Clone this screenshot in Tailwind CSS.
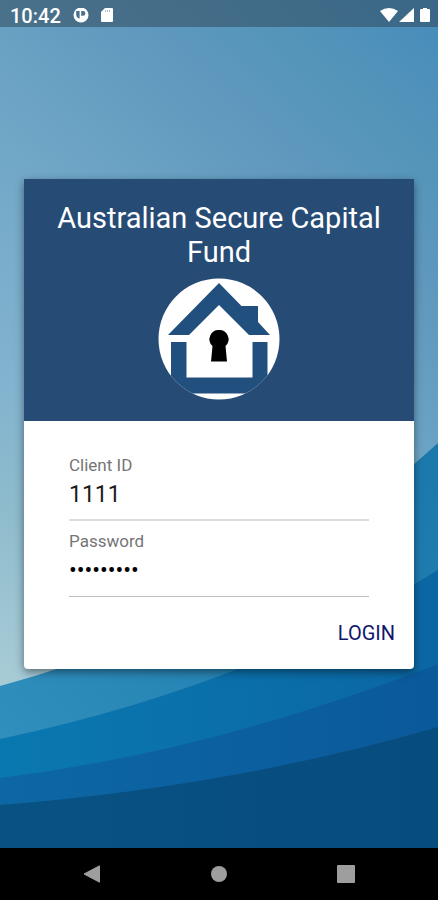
<!DOCTYPE html>
<html lang="en">
<head>
<meta charset="utf-8">
<meta name="viewport" content="width=device-width, initial-scale=1">
<title>Australian Secure Capital Fund</title>
<script src="https://cdn.jsdelivr.net/npm/@tailwindcss/browser@4"></script>
</head>
<body class="font-[Roboto,sans-serif]">
<div class="relative isolate flex min-h-screen flex-col">
  <!-- wave backdrop -->
  <svg class="absolute inset-0 -z-10 h-full w-full" viewBox="0 0 438 900" preserveAspectRatio="none" aria-hidden="true">
    <defs>
      <linearGradient id="sky" gradientUnits="userSpaceOnUse" x1="438" y1="30" x2="-84" y2="604">
        <stop offset="0" stop-color="#488dbb"/>
        <stop offset="0.14" stop-color="#5595ba"/>
        <stop offset="0.26" stop-color="#6098be"/>
        <stop offset="0.41" stop-color="#6ba3c4"/>
        <stop offset="0.71" stop-color="#82b3cf"/>
        <stop offset="0.83" stop-color="#8ebbcc"/>
        <stop offset="1" stop-color="#a8ccd6"/>
      </linearGradient>
      <linearGradient id="w1" x1="0" y1="1" x2="1" y2="0">
        <stop offset="0" stop-color="#3795c2"/>
        <stop offset="0.5" stop-color="#2684b4"/>
        <stop offset="1" stop-color="#1a78ab"/>
      </linearGradient>
      <linearGradient id="w2" x1="0" y1="0" x2="1" y2="0">
        <stop offset="0" stop-color="#0a78b0"/>
        <stop offset="1" stop-color="#0b67a3"/>
      </linearGradient>
      <linearGradient id="w3" x1="0" y1="0" x2="1" y2="0">
        <stop offset="0" stop-color="#0d67a5"/>
        <stop offset="1" stop-color="#0a599b"/>
      </linearGradient>
      <linearGradient id="w4" x1="0" y1="0" x2="1" y2="0">
        <stop offset="0" stop-color="#085283"/>
        <stop offset="1" stop-color="#074c7e"/>
      </linearGradient>
    </defs>
    <path fill="url(#sky)" d="M0 0H438V900H0Z"/>
    <path fill="url(#w1)" d="M0 686Q240 622 438 443V900H0Z"/>
    <path fill="url(#w2)" d="M0 739Q250 686 438 570V900H0Z"/>
    <path fill="url(#w3)" d="M0 778Q215 751 438 664V900H0Z"/>
    <path fill="url(#w4)" d="M0 805Q235 786 438 727V900H0Z"/>
  </svg>

  <header class="flex h-[27px] items-center justify-between bg-[#324a5c]/55 pt-1 pr-2 pl-[10px] text-white">
    <div class="flex items-center gap-3">
      <span class="text-xl leading-5 font-medium">10:42</span>
      <svg class="size-4" viewBox="0 0 16 16" aria-hidden="true">
        <circle cx="8" cy="7" r="7.500" fill="#fff"/>
        <path fill="#47708e" d="M3.200 3H6.600V10.600A4.600 4.600 0 0 1 3.200 6ZM8.200 3H10A2.400 2.400 0 0 1 10 7.800H8.200Z"/>
      </svg>
      <svg class="h-4 w-3" viewBox="0 0 12 16" aria-hidden="true">
        <path fill="#fff" d="M4 0H11Q12 0 12 1V13Q12 14 11 14H1Q0 14 0 13V4Z"/>
        <path stroke="#a9bfce" d="M4.500 2V4M6.500 2V4M8.500 2V4"/>
      </svg>
    </div>
    <div class="flex items-center gap-1">
      <svg class="h-4 w-[36px]" viewBox="0 0 36 16" fill="#fff" aria-hidden="true">
        <path d="M0 3Q9 -3 18 3L9 14Z"/>
        <path d="M34 0V14H19Z"/>
      </svg>
      <svg class="h-4 w-[10px]" viewBox="0 0 10 16" fill="#fff" aria-hidden="true">
        <path d="M3 0H7V1H9Q10 1 10 2V13Q10 14 9 14H1Q0 14 0 13V2Q0 1 1 1H3Z"/>
      </svg>
    </div>
  </header>

  <main class="flex flex-1 flex-col justify-center px-6 pb-[27px]">
    <div class="overflow-hidden rounded-b-[4px] bg-white shadow-[0_3px_8px_rgba(0,0,0,0.45)]">
      <div class="flex flex-col items-center gap-2 bg-[#264b75] px-6 pt-[22px] pb-5">
        <h1 class="text-center text-[29px] leading-[34px] text-white">Australian Secure Capital Fund</h1>
        <svg class="size-[124px]" viewBox="0 0 124 124" role="img" aria-label="House with keyhole">
          <defs><clipPath id="disc"><circle cx="62" cy="62" r="60.500"/></clipPath></defs>
          <circle cx="62" cy="62" r="60.500" fill="#fff"/>
          <g clip-path="url(#disc)" fill="#22507e">
            <path d="M62 6L84.500 29H101V45L113 58H92L62 28L32 58H11Z"/>
            <path d="M14 65H29.500V100.500H95.500V65H110.500V116.500H14Z"/>
          </g>
          <path fill="#000" d="M62 53A9.200 9.200 0 0 1 68.500 69L70 84.500H54L55.500 69A9.200 9.200 0 0 1 62 53Z"/>
        </svg>
      </div>
      <form class="flex flex-col px-[45px] pt-8 pb-5">
        <label for="client" class="text-[17px] leading-6 text-[#757575]">Client ID</label>
        <input id="client" type="text" value="1111" class="h-11 w-full border-b-2 border-[#dcdcdc] pb-2 text-[23px] leading-7 text-[#1c1c1c] outline-none">
        <label for="password" class="mt-2 text-[17px] leading-6 text-[#757575]">Password</label>
        <input id="password" type="password" value="password1" class="h-11 w-full border-b border-[#bdbdbd] pb-2 text-[23px] leading-7 text-black outline-none">
        <button type="button" class="-mr-[26px] mt-5 self-end text-xl leading-8 text-[#10186b]">LOGIN</button>
      </form>
    </div>
  </main>

  <nav class="flex h-[52px] items-center justify-around bg-black px-[29px]" aria-label="System">
    <button type="button" aria-label="Back" class="flex size-8 items-center justify-center"><svg class="size-[18px]" viewBox="0 0 18 18"><path fill="#9e9e9e" stroke="#9e9e9e" stroke-linejoin="round" d="M1 9L16.500 .8V17.200Z"/></svg></button>
    <button type="button" aria-label="Home" class="flex size-8 items-center justify-center"><span class="size-4 rounded-full bg-[#9e9e9e]"></span></button>
    <button type="button" aria-label="Recents" class="flex size-8 items-center justify-center"><span class="size-[18px] rounded-[1px] bg-[#9e9e9e]"></span></button>
  </nav>
</div>
</body>
</html>
